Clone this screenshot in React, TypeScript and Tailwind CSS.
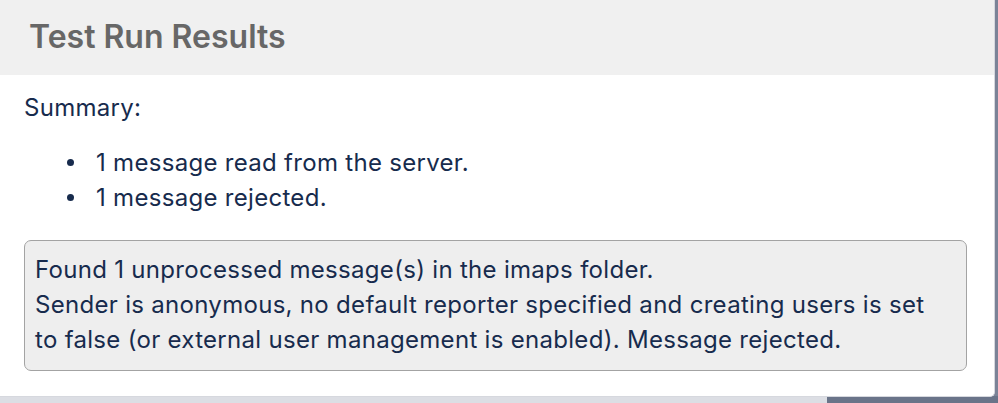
import React from "react";

export default function App() {
  const font = { fontFamily: "Inter, 'Noto Sans', 'Liberation Sans', sans-serif" };
  const items = ["1 message read from the server.", "1 message rejected."];
  return (
    <div className="relative w-[998px] h-[403px] overflow-hidden bg-[#7b8397]" style={font}>
      <div className="absolute left-0 right-0 bottom-0 h-[7px] flex">
        <div className="w-[827px] bg-[#dcdee4]" />
        <div className="flex-1 bg-[#6a7489]" />
      </div>
      <div className="relative w-[995px] h-[397px] bg-white rounded-br-[5px] border-r border-b border-[#d6d8de] overflow-hidden">
        <div className="h-[75px] bg-[#f0f0f0] pl-[29px] flex items-center">
          <h1 className="text-[32px] leading-[40px] font-semibold text-[#676767] -mt-[1px]">
            Test Run Results
          </h1>
        </div>
        <div className="pl-[24px] pt-[15px] text-[24px] leading-[35px] tracking-[0.3px] text-[#172b4d]">
          <p>Summary:</p>
          <ul className="mt-[20px]">
            {items.map((t) => (
              <li key={t} className="flex items-center">
                <span className="w-[43px] flex items-center">
                  <span className="ml-[43px] w-[7px] h-[7px] rounded-full bg-[#172b4d] shrink-0" />
                </span>
                <span className="ml-[29px]">{t}</span>
              </li>
            ))}
          </ul>
          <div className="mt-[25px] w-[943px] border border-[#a3a3a3] rounded-[7px] bg-[#eeeeee] pl-[10px] pt-[11px] pb-[13px]">
            <p>Found 1 unprocessed message(s) in the imaps folder.</p>
            <p>
              Sender is anonymous, no default reporter specified and creating users is set
              <br />
              to false (or external user management is enabled). Message rejected.
            </p>
          </div>
        </div>
      </div>
    </div>
  );
}
